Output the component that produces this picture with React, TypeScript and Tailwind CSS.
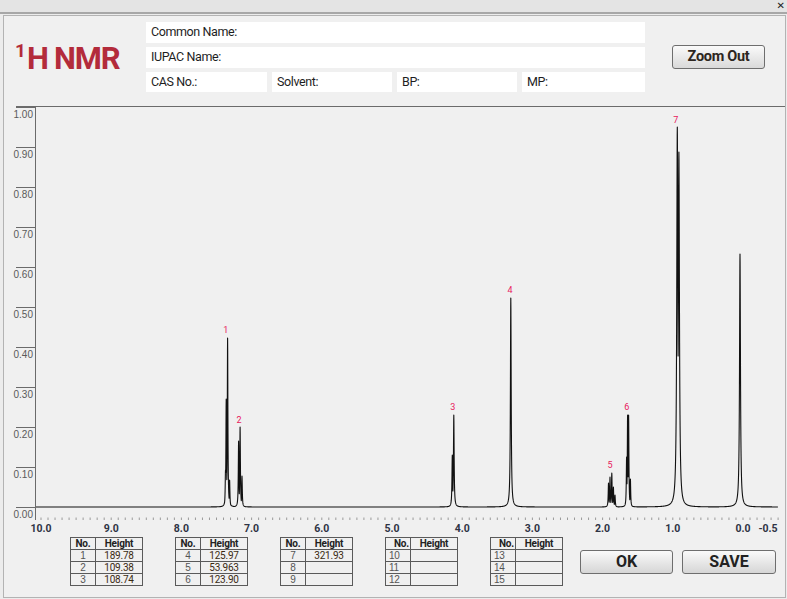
import { FC } from 'react';

const NARROW = "font-['Roboto','Liberation_Sans',sans-serif]";
const SVG_NARROW = "Roboto,'Liberation Sans',sans-serif";

// spectrum lines in screen px: [x, height, half-width]
const LINES: [number, number, number][] = [
  // peak 1
  [225.5, 37, 0.35],
  [226.2, 108, 0.35],
  [227.6, 169, 0.35],
  [229.6, 27, 0.35],
  // peak 2
  [238.6, 66, 0.35],
  [240.1, 80, 0.35],
  [242.0, 31, 0.35],
  // peak 3
  [452.3, 52, 0.4],
  [453.8, 92, 0.4],
  // peak 4
  [510.8, 209, 0.45],
  // peak 5
  [608.5, 24, 0.35],
  [610.0, 30, 0.35],
  [611.8, 34, 0.35],
  [613.4, 20, 0.35],
  [615.0, 12, 0.35],
  // peak 6
  [626.6, 50, 0.35],
  [627.6, 92, 0.35],
  [628.6, 92, 0.35],
  [630.4, 28, 0.35],
  // peak 7
  [677.3, 380, 0.65],
  [678.9, 355, 0.65],
  // TMS
  [740.0, 253, 0.55],
];

const BASE = 507;

const buildPath = () => {
  const pts: string[] = [];
  for (let x = 36; x <= 778; x += 0.1) {
    let m = 0;
    for (const [x0, h, w] of LINES) {
      const d = (x - x0) / w;
      const v = h / (1 + d * d);
      if (v > m) m = v;
    }
    pts.push(`${x.toFixed(2)} ${(BASE - m).toFixed(2)}`);
  }
  return 'M' + pts.join(' L');
};

const PEAK_LABELS = [
  { n: 1, x: 225.7, y: 333 },
  { n: 2, x: 239, y: 423 },
  { n: 3, x: 452.7, y: 410 },
  { n: 4, x: 510, y: 293 },
  { n: 5, x: 610, y: 468 },
  { n: 6, x: 626.7, y: 410 },
  { n: 7, x: 675.7, y: 123 },
];

const ppmX = (ppm: number) => 743 - 70.2 * ppm;

const Spectrum: FC = () => {
  const path = buildPath();
  const yTicks = Array.from({ length: 11 }, (_, i) => i);
  const minor: number[] = [];
  for (let p = 10.0; p >= -0.5; p -= 0.1) minor.push(ppmX(p));
  const xLabels = ['10.0', '9.0', '8.0', '7.0', '6.0', '5.0', '4.0', '3.0', '2.0', '1.0', '0.0'];

  return (
    <svg width={781} height={436} viewBox="4 100 781 436" className="block">
      {/* frame lines */}
      <line x1={16} y1={106.5} x2={785} y2={106.5} stroke="#6b6b6b" strokeWidth={1} />
      <line x1={35.5} y1={106} x2={35.5} y2={520} stroke="#6b6b6b" strokeWidth={1} />

      {/* y axis */}
      {yTicks.map((i) => {
        const y = Math.round(507 - 40 * i) + 0.5;
        return (
          <g key={i}>
            <line x1={16} y1={y} x2={35} y2={y} stroke="#6b6b6b" strokeWidth={1} />
            <text x={33} y={y + 10} textAnchor="end" fontSize={10} fill="#5a5a5a" fontFamily="'Liberation Sans',Arial,sans-serif">
              {(i / 10).toFixed(2)}
            </text>
          </g>
        );
      })}

      {/* x axis ticks */}
      {minor.map((x, i) => (
        <line key={i} x1={x} y1={517.5} x2={x} y2={520} stroke="#9a9a9a" strokeWidth={1} />
      ))}
      {xLabels.map((l, i) => (
        <text key={l} x={ppmX(10 - i)} y={532} textAnchor="middle" fontSize={10.5} fontWeight={700} fill="#2e3344" fontFamily={SVG_NARROW}>
          {l}
        </text>
      ))}
      <text x={768} y={532} textAnchor="middle" fontSize={10.5} fontWeight={700} fill="#2e3344" fontFamily={SVG_NARROW}>
        -0.5
      </text>

      {/* spectrum */}
      <path d={path} fill="none" stroke="#111" strokeWidth={1.1} strokeLinejoin="round" />

      {PEAK_LABELS.map((p) => (
        <text key={p.n} x={p.x} y={p.y} textAnchor="middle" fontSize={9} fill="#e8185c" fontFamily={SVG_NARROW}>
          {p.n}
        </text>
      ))}
    </svg>
  );
};

interface PeakTableProps {
  rows: { no: number; height: string }[];
  rightNo?: boolean;
}

const PeakTable: FC<PeakTableProps> = ({ rows, rightNo }) => (
  <table className="w-[73px] border-collapse text-[10px] leading-none tracking-[-0.2px]">
    <thead>
      <tr className="h-[12px]">
        <th className={`w-[25px] border border-[#5a5a5a] font-bold text-[#222] ${rightNo ? 'text-right pr-[1px]' : 'text-center'}`}>No.</th>
        <th className="border border-[#5a5a5a] font-bold text-[#222] text-center">Height</th>
      </tr>
    </thead>
    <tbody>
      {rows.map((r) => (
        <tr key={r.no} className="h-[12px]">
          <td className={`border border-[#5a5a5a] text-[#555] font-['Liberation_Sans',sans-serif] text-[10px] ${rightNo ? 'text-left pl-[3px]' : 'text-center'}`}>
            {r.no}
          </td>
          <td className="border border-[#5a5a5a] text-center text-[#3b2a12]">{r.height}</td>
        </tr>
      ))}
    </tbody>
  </table>
);

const TABLES: { rows: { no: number; height: string }[]; rightNo?: boolean }[] = [
  { rows: [{ no: 1, height: '189.78' }, { no: 2, height: '109.38' }, { no: 3, height: '108.74' }] },
  { rows: [{ no: 4, height: '125.97' }, { no: 5, height: '53.963' }, { no: 6, height: '123.90' }] },
  { rows: [{ no: 7, height: '321.93' }, { no: 8, height: '' }, { no: 9, height: '' }] },
  { rows: [{ no: 10, height: '' }, { no: 11, height: '' }, { no: 12, height: '' }], rightNo: true },
  { rows: [{ no: 13, height: '' }, { no: 14, height: '' }, { no: 15, height: '' }], rightNo: true },
];

const Field: FC<{ label: string; className?: string }> = ({ label, className }) => (
  <div className={`bg-white flex items-center pl-[5px] text-[12.5px] tracking-[-0.4px] text-[#1e1e1e] ${className ?? ''}`}>{label}</div>
);

const App: FC = () => {
  return (
    <div className={`w-[787px] h-[599px] bg-[#ececec] overflow-hidden ${NARROW}`}>
      {/* title bar */}
      <div className="h-[14px] bg-[#e4e4e4] border-b-2 border-[#a7a7a7] flex justify-end items-start pr-[2px]">
        <span className="text-[10px] leading-[11px] font-bold text-[#222] font-['DejaVu_Sans',sans-serif]">✕</span>
      </div>

      {/* body */}
      <div className="ml-[3px] mr-[1px] mt-px h-[583px] border border-[#b3b3b3] bg-[#f0f0f0]">
        {/* header */}
        <div className="flex pt-[6px] h-[84px]">
          <div className="w-[142px] pl-[11px] pt-[19px] text-[#b32b3b] font-bold leading-none flex items-start">
            <span className="text-[19px] leading-[19px] mr-[1px]">1</span>
            <span className="text-[31px] tracking-[-1.2px] leading-[31px] mt-[2px]">H NMR</span>
          </div>
          <div className="w-[499px] flex flex-col gap-[4px]">
            <Field label="Common Name:" className="h-[21px]" />
            <Field label="IUPAC Name:" className="h-[21px]" />
            <div className="flex gap-[5px] h-[20px]">
              <Field label="CAS No.:" className="w-[121px]" />
              <Field label="Solvent:" className="w-[120px]" />
              <Field label="BP:" className="w-[120px]" />
              <Field label="MP:" className="w-[123px]" />
            </div>
          </div>
          <div className="ml-[27px] pt-[22px]">
            <button className="w-[93px] h-[24px] rounded-[3px] border border-[#6e6e6e] bg-gradient-to-b from-[#fafafa] to-[#d9d9d9] text-[14.5px] tracking-[-0.3px] font-bold text-[#2d2620] leading-none">
              Zoom Out
            </button>
          </div>
        </div>

        {/* chart */}
        <Spectrum />

        {/* tables + buttons */}
        <div className="flex items-start mt-px">
          <div className="flex gap-[32px] pl-[66px]">
            {TABLES.map((t, i) => (
              <PeakTable key={i} rows={t.rows} rightNo={t.rightNo} />
            ))}
          </div>
          <div className="flex gap-[9px] ml-[17px] mt-[13px]">
            <button className="w-[93px] h-[24px] rounded-[3px] border border-[#6e6e6e] bg-gradient-to-b from-[#fafafa] to-[#d6d6d6] text-[16px] font-bold text-[#222] leading-none">
              OK
            </button>
            <button className="w-[94px] h-[24px] rounded-[3px] border border-[#6e6e6e] bg-gradient-to-b from-[#fafafa] to-[#d6d6d6] text-[16px] font-bold text-[#222] leading-none">
              SAVE
            </button>
          </div>
        </div>
      </div>
    </div>
  );
};

export default App;
